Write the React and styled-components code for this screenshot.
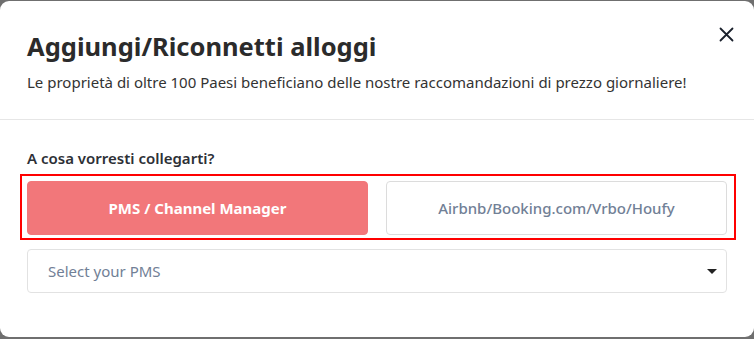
import React from 'react'
import styled, { createGlobalStyle } from 'styled-components'

const GlobalStyle = createGlobalStyle`
    *, *::before, *::after {
        box-sizing: border-box;
    }
    html, body {
        margin: 0;
        padding: 0;
        background: #6f6f6f;
        font-family: "Noto Sans", "Open Sans", sans-serif;
    }
`

const Modal = styled.div`
    position: relative;
    margin-top: 1px;
    height: 336px;
    background: #ffffff;
    border-radius: 9px;
    overflow: hidden;
`

const Header = styled.div`
    padding: 28px 27px 0;
    height: 119px;
    border-bottom: 1px solid #e6e6e6;
`

const Title = styled.h2`
    margin: 0;
    font-size: 25.5px;
    line-height: 34px;
    font-weight: 700;
    color: #2b2b2b;
`

const Subtitle = styled.p`
    margin: 9px 0 0;
    font-size: 15px;
    line-height: 20px;
    color: #333333;
`

const Close = styled.button`
    position: absolute;
    top: 23px;
    right: 18px;
    width: 20px;
    height: 20px;
    padding: 0;
    border: none;
    background: transparent;
    display: flex;
    align-items: center;
    justify-content: center;
    cursor: pointer;
`

const Body = styled.div`
    padding: 28px 27px 0 20px;
`

const Label = styled.div`
    margin-left: 7px;
    font-size: 15px;
    line-height: 20px;
    font-weight: 600;
    color: #2d3036;
`

const Group = styled.div`
    margin-top: 6px;
    width: 716px;
    border: 2px solid #ff0000;
    padding: 5px 7px 3px 5px;
    display: grid;
    grid-template-columns: 1fr 1fr;
    gap: 18px;
`

const Choice = styled.button`
    height: 54px;
    border-radius: 4px;
    border: 1px solid ${p => (p.$active ? '#f2777a' : '#dcdcdc')};
    background: ${p => (p.$active ? '#f2777a' : '#ffffff')};
    color: ${p => (p.$active ? '#ffffff' : '#718096')};
    font-family: inherit;
    font-size: 15px;
    font-weight: ${p => (p.$active ? 700 : 500)};
    cursor: pointer;
`

const Select = styled.div`
    margin: 9px 0 0 7px;
    height: 44px;
    border: 1px solid #e2e2e2;
    border-radius: 4px;
    display: flex;
    align-items: center;
    justify-content: space-between;
    padding: 0 9px 0 20px;
    font-size: 15px;
    color: #718096;
`

const Caret = styled.span`
    width: 0;
    height: 0;
    border-left: 5px solid transparent;
    border-right: 5px solid transparent;
    border-top: 5px solid #222;
`

const App = () => {
  return (
    <>
      <GlobalStyle />
      <Modal>
        <Header>
          <Title>Aggiungi/Riconnetti alloggi</Title>
          <Subtitle>Le proprietà di oltre 100 Paesi beneficiano delle nostre raccomandazioni di prezzo giornaliere!</Subtitle>
        </Header>
        <Close aria-label="Chiudi">
          <svg width="15" height="15" viewBox="0 0 15 15">
            <path d="M1.5 1.5 L13.5 13.5 M13.5 1.5 L1.5 13.5" stroke="#1a202c" strokeWidth="1.8" strokeLinecap="round" />
          </svg>
        </Close>
        <Body>
          <Label>A cosa vorresti collegarti?</Label>
          <Group>
            <Choice $active>PMS / Channel Manager</Choice>
            <Choice>Airbnb/Booking.com/Vrbo/Houfy</Choice>
          </Group>
          <Select>
            <span>Select your PMS</span>
            <Caret />
          </Select>
        </Body>
      </Modal>
    </>
  )
}

export default App
